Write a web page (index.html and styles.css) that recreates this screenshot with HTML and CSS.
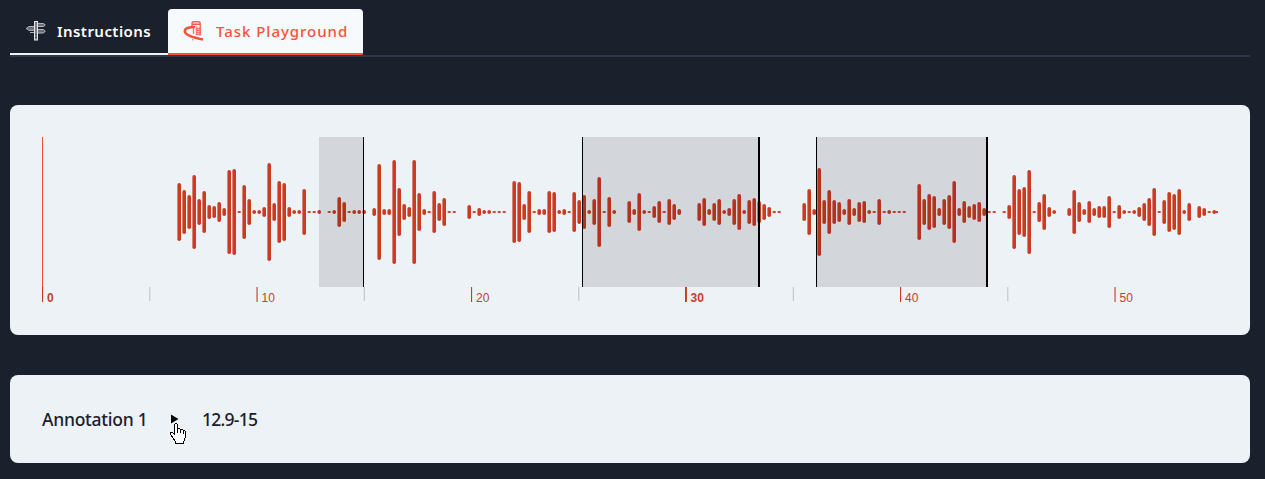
FILE: index.html
```html
<!DOCTYPE html>
<html lang="en">
<head>
<meta charset="utf-8">
<title>Task Playground</title>
<link rel="stylesheet" href="styles.css">
</head>
<body>
<nav class="tabs">
  <a class="tab">
    <svg class="tab-icon" width="22" height="22" viewBox="0 0 22 22">
      <path d="M12 3.500H18.500L20.300 5 18.500 6.500H12M9 6.500H4L1.200 8.500 4 10.300H9M12 9.500H18.500L20.300 11.200 18.500 13H12M9 12.500H5" fill="#686d76" stroke="#b4b6bc" stroke-width="1"/>
      <rect x="9.500" y="1.500" width="3" height="18.500" fill="#777b82" stroke="#e4e5e8"/>
      <path d="M10.500 14h1v1h-1zM10.500 17h1v1h-1z" fill="#1a202c"/>
    </svg>
    <span class="tab-text">Instructions</span>
  </a>
  <a class="tab active">
    <svg class="tab-icon" width="22" height="22" viewBox="0 0 22 22">
      <path d="M9 8V3.500Q9 1.800 10.500 1.800H15.500Q17.200 1.800 17.200 3.500V15.500M9.500 4.200H17" fill="none" stroke="#fa5c48" stroke-width="1.400"/>
      <path d="M10.500 7V14M13.500 8.500H17M13.500 10.500H17M13.500 12.500H17M13.500 14.500H17M13.500 6.500V15" fill="none" stroke="#fb7666" stroke-width="1.400"/>
      <path d="M12 7C6 7 1.800 8.300 1.800 11C1.800 15 9 17.500 20 19.500" fill="none" stroke="#fc4d36" stroke-width="2.600"/>
      <path d="M9 19h1.200v1.500H9z" fill="#fb8374"/>
    </svg>
    <span class="tab-text">Task Playground</span>
  </a>
</nav>
<main>
  <section class="card wave-card">
    <svg class="wave" width="1176" height="168" viewBox="0 0 1176 168">
      <g id="bars" class="bars"></g>
      <g id="regions"></g>
      <rect class="playhead" x="0" y="0" width="1" height="150"/>
      <g id="ticks"></g>
    </svg>
  </section>
  <section class="card note">
    <span class="note-name">Annotation 1</span>
    <button class="play" aria-label="Play">
      <svg width="8" height="10" viewBox="0 0 8 10"><path d="M0 .5L7.500 5 0 9.500z"/></svg>
      <svg class="pointer" width="17" height="22" viewBox="0 0 17 22">
        <path d="M4.500 1.500L5.500.5H6.500L7.500 1.500V5.500H9.500L10.500 6.500H12.500L13.500 7.500H14.500L15.500 8.500V14.500L14.500 15.500V17.500L13.500 18.500V20.500H5.500V18.500L4.500 17.500 3.500 15.500 2.500 14.500 1.500 12.500.5 11.500V9.500H2.500L4.500 11.500z"/>
        <path d="M7.500 5.500V10M10.500 6.500V10M13.500 7.500V11"/>
      </svg>
    </button>
    <span class="note-range">12.9-15</span>
  </section>
</main>
<script src="app.js"></script>
</body>
</html>
```
FILE: styles.css
```css
body {
  margin: 0;
  padding: 9px 15px 0 10px;
  height: 470px;
  overflow: hidden;
  background: #1a202c;
  color: #1a202c;
  font-family: "Noto Sans", "Open Sans", sans-serif;
}
.tabs {
  display: flex;
  height: 46px;
  border-bottom: 2px solid #2d3748;
}
.tab {
  box-sizing: border-box;
  display: flex;
  align-items: center;
  gap: 10px;
  width: 158px;
  height: 46px;
  padding-left: 15px;
  border-bottom: 2px solid #edf2f7;
  color: #fff;
  font-size: 15px;
  font-weight: 600;
  letter-spacing: 0.45px;
  white-space: nowrap;
}
.tab.active {
  gap: 11px;
  width: 195px;
  border-radius: 4px 4px 0 0;
  border-bottom-color: #ff4b33;
  background: #f7fafc;
  color: #fd4f39;
  font-weight: 500;
  letter-spacing: 0.97px;
}
.tab-icon { flex: none; }
main {
  display: flex;
  flex-direction: column;
  gap: 40px;
  padding-top: 48px;
}
.card {
  box-sizing: border-box;
  border-radius: 8px;
  background: #edf2f7;
}
.wave-card {
  height: 230px;
  padding: 32px;
}
.wave { display: block; }
.bars { fill: #cb3a22; }
.playhead { fill: #ff4b33; }
.region { fill: rgba(0, 0, 0, 0.11); }
.handle { fill: #000; }
.tick { fill: #c83a24; }
.tick-minor { fill: #c3c4c6; }
.tick-label {
  fill: #c5402c;
  font: 12px "Liberation Sans", Arial, sans-serif;
}
.tick-label.strong { font-weight: bold; }
.note {
  display: flex;
  align-items: center;
  height: 88px;
  padding: 0 32px;
  font-size: 17.5px;
  font-weight: 500;
  letter-spacing: -0.25px;
}
.note-name { width: 129px; }
.note-range { letter-spacing: -0.75px; }
.play {
  position: relative;
  width: 31px;
  height: 10px;
  padding: 0;
  border: 0;
  background: none;
}
.play svg { display: block; }
.play .pointer {
  position: absolute;
  left: -1px;
  top: 9px;
  fill: #fff;
  stroke: #000;
  shape-rendering: crispEdges;
}
```
FILE: app.js
```javascript
const NS = "http://www.w3.org/2000/svg";

function add(parent, tag, attrs, text) {
  const el = document.createElementNS(NS, tag);
  for (const key in attrs) el.setAttribute(key, attrs[key]);
  if (text) el.textContent = text;
  document.getElementById(parent).appendChild(el);
}

// Half-height of each bar; one bar every 5px.
const peaks = [
  29,22,17,37,13,21,7,6,10,4,42,43,1,27,13,2,2,5,49,9,
  31,29,5,2,2,23,1,1,2,0,1,2,15,10,1,2,2,2,0,4,
  48,3,3,52,24,8,5,52,19,3,1,21,9,14,1,1,0,0,7,1,
  4,2,2,1,1,1,0,31,30,8,21,1,3,3,21,20,2,3,1,20,
  12,17,2,13,35,1,15,2,0,0,11,3,19,2,1,6,11,1,13,8,
  3,0,0,0,9,14,3,9,13,2,4,13,18,2,12,14,11,8,5,1,
  1,0,0,0,0,9,23,3,44,12,22,12,10,3,13,4,10,11,2,1,
  13,1,2,1,1,1,0,0,28,13,18,16,4,13,17,31,4,11,6,8,
  10,4,1,1,0,1,7,37,23,25,42,1,10,18,5,2,0,0,4,22,
  10,3,11,4,6,6,16,1,7,2,1,2,5,9,14,24,1,12,20,18,
  23,2,9,0,6,4,1,2
];
peaks.forEach((h, i) => {
  if (!h) return;
  add("bars", "rect", {
    x: 135.4 + i * 5, y: 75 - h, width: 3.6, height: h * 2,
    rx: h === 1 ? 1.8 : Math.min(1.8, h), ry: Math.min(1.8, h)
  });
});
add("bars", "rect", { x: 1174, y: 74, width: 2, height: 2 });

// Selected ranges: left, width, left handle width, right handle width.
[[277, 45, 0, 1], [540, 178, 1, 2], [774, 172, 1, 2]].forEach(([x, w, l, r]) => {
  add("regions", "rect", { class: "region", x, y: 0, width: w, height: 150 });
  if (l) add("regions", "rect", { class: "handle", x, y: 0, width: l, height: 150 });
  add("regions", "rect", { class: "handle", x: x + w - r, y: 0, width: r, height: 150 });
});

for (let s = 0; s <= 50; s += 5) {
  const x = s * 21.45;
  const major = s % 10 === 0;
  add("ticks", "rect", {
    class: major ? "tick" : "tick-minor",
    x: s === 30 ? 643 : x, y: 150, width: s === 30 ? 1.9 : 1.1, height: major ? 15 : 14
  });
  if (major) {
    add("ticks", "text", {
      class: "tick-label" + (s % 30 ? "" : " strong"), x: x + 5, y: 165
    }, String(s));
  }
}
```
